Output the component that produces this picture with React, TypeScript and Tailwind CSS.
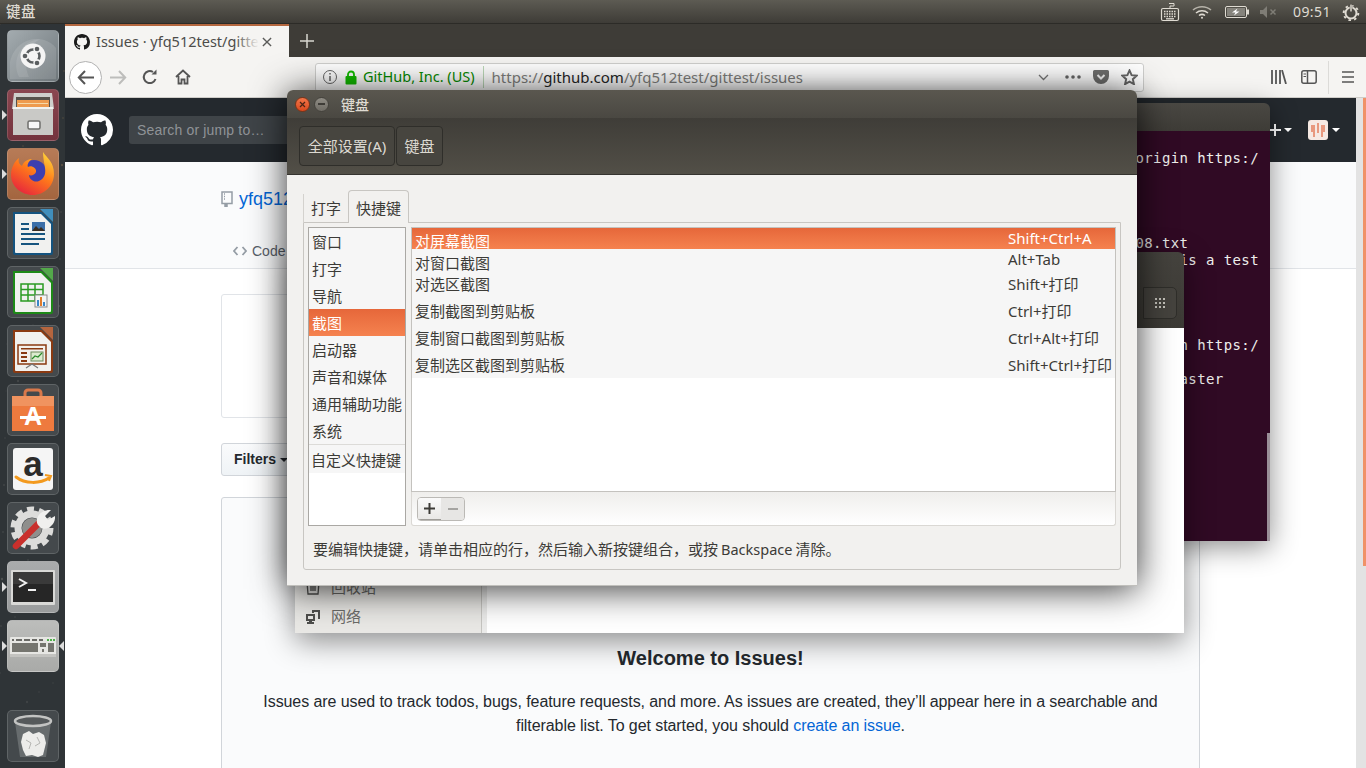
import type { ReactNode } from "react";

const L = ({ children }: { children: ReactNode }) => <span className="text-[14.500px] mx-[3px]">{children}</span>;

const GH =
  "M8 0C3.58 0 0 3.58 0 8c0 3.54 2.29 6.53 5.47 7.59.4.07.55-.17.55-.38 0-.19-.01-.82-.01-1.49-2.01.37-2.53-.49-2.69-.94-.09-.23-.48-.94-.82-1.13-.28-.15-.68-.52-.01-.53.63-.01 1.08.58 1.23.82.72 1.21 1.87.87 2.33.66.07-.52.28-.87.51-1.07-1.78-.2-3.64-.89-3.64-3.95 0-.87.31-1.59.82-2.15-.08-.2-.36-1.02.08-2.12 0 0 .67-.21 2.2.82.64-.18 1.32-.27 2-.27.68 0 1.36.09 2 .27 1.53-1.04 2.2-.82 2.2-.82.44 1.1.16 1.92.08 2.12.51.56.82 1.27.82 2.15 0 3.07-1.87 3.75-3.65 3.95.29.25.54.73.54 1.48 0 1.07-.01 1.93-.01 2.2 0 .21.15.46.55.38A8.013 8.013 0 0016 8c0-4.42-3.58-8-8-8z";

// launcher tile
function Tile({ bg, left, right, children }: { bg: string; left?: boolean; right?: boolean; children: ReactNode }) {
  return (
    <div className={`relative w-[52px] h-[52px] rounded-[5px] border border-white/15 ${bg}`}>
      <svg viewBox="0 0 52 52" className="absolute -inset-px w-[52px] h-[52px]">
        {children}
      </svg>
      {left && <span className="absolute left-[-6px] top-[20px] w-0 h-0 border-y-[5px] border-y-transparent border-l-[5px] border-l-[#dcdcdc]" />}
      {right && <span className="absolute right-[-6px] top-[20px] w-0 h-0 border-y-[5px] border-y-transparent border-r-[5px] border-r-[#dcdcdc]" />}
    </div>
  );
}

function DocShape({ edge, corner, children }: { edge: string; corner: string; children: ReactNode }) {
  return (
    <>
      <path d="M6 5h29l11 11v30a2 2 0 01-2 2H8a2 2 0 01-2-2z" fill={edge} />
      <path d="M33 2h13v13z" fill={corner} opacity="0.85" />
      <path d="M8 7h26l10 10v28a1 1 0 01-1 1H9a1 1 0 01-1-1z" fill="#f1f1ef" />
      {children}
    </>
  );
}

function Launcher() {
  const specks = Array.from({ length: 70 }, (_, i) => ({
    x: (i * 37) % 65,
    y: (i * 113) % 744,
    o: 0.1 + ((i * 7) % 10) / 30,
  }));
  return (
    <div className="relative w-[65px] shrink-0 flex flex-col items-center gap-[7px] pt-[6px] pb-[6px] bg-[#2f3437]">
      <svg className="absolute inset-0 w-[65px] h-[744px]">
        {specks.map((s, i) => (
          <circle key={i} cx={s.x} cy={s.y} r={i % 3 === 0 ? 1.2 : 0.7} fill={s.y < 170 ? "#a8845a" : "#8d8d88"} opacity={s.o} />
        ))}
      </svg>

      {/* ubuntu */}
      <Tile bg="bg-linear-to-br from-[#a3abaf] to-[#6f777b]">
        <path d="M3 32C8 8 36 2 49 18v31H3z" fill="#ffffff" opacity="0.12" />
        <path d="M12 47C4 30 14 10 34 9 22 14 14 28 22 47z" fill="#ffffff" opacity="0.1" />
        <circle cx="26" cy="26" r="12.500" fill="#f4f4f4" />
        <circle cx="26" cy="26" r="6.500" fill="none" stroke="#5a5e60" strokeWidth="2.600" />
        <circle cx="18.500" cy="26" r="3.400" fill="#f4f4f4" />
        <circle cx="29.800" cy="19.500" r="3.400" fill="#f4f4f4" />
        <circle cx="29.800" cy="32.500" r="3.400" fill="#f4f4f4" />
        <circle cx="18" cy="26" r="2.300" fill="#5a5e60" />
        <circle cx="30" cy="19" r="2.300" fill="#5a5e60" />
        <circle cx="30" cy="33" r="2.300" fill="#5a5e60" />
      </Tile>

      {/* files */}
      <Tile left bg="bg-linear-to-b from-[#8a4650] to-[#74333d]">
        <path d="M7 4h38l2 16H5z" fill="#cfcfcc" />
        <rect x="9" y="8" width="34" height="10" fill="#57524c" />
        <rect x="10" y="11" width="32" height="7" fill="#ee9b4f" />
        <rect x="11" y="14" width="30" height="1" fill="#f6d9a8" />
        <path d="M6 19l40-1v28H6z" fill="#c9c9c6" />
        <rect x="6" y="18" width="40" height="2" fill="#f2f2f0" />
        <rect x="21" y="32" width="12" height="8" rx="1.500" fill="#f7f7f7" stroke="#6f6f6c" strokeWidth="1.500" />
      </Tile>

      {/* firefox */}
      <Tile left bg="bg-linear-to-b from-[#b77b57] to-[#a3653f]">
        <defs>
          <linearGradient id="ff" x1="0.800" y1="0" x2="0.200" y2="1">
            <stop offset="0" stopColor="#ffd43a" />
            <stop offset="0.45" stopColor="#ff7a1a" />
            <stop offset="1" stopColor="#e5203f" />
          </linearGradient>
        </defs>
        <circle cx="27" cy="25" r="13" fill="#3d3fb0" />
        <path d="M36 4C40 10 47 14 47 26 47 38 37 47 26 47 14 47 4 38 4 27 4 19 8 13 12 10 11 14 12 16 15 18 17 13 21 11 25 11 21 14 20 17 21 19 24 17 30 20 29 24 28 27 24 28 22 27 22 31 27 35 32 33 37 31 39 26 38 20 37 14 36 9 36 4Z" fill="url(#ff)" />
      </Tile>

      {/* writer */}
      <Tile bg="bg-[#44494c]">
        <DocShape edge="#14537f" corner="#3f9ad0">
          <path d="M14 16h8v2h-8zM14 21h8v2h-8zM14 26h24v2H14zM14 31h24v2H14zM14 36h18v2H14z" fill="#17557f" />
          <rect x="25" y="15" width="13" height="9" fill="#3b6ea8" />
          <path d="M25 24l4-5 3 3 2-2 4 4z" fill="#3a2c20" />
        </DocShape>
      </Tile>

      {/* calc */}
      <Tile bg="bg-[#44494c]">
        <DocShape edge="#1d8a17" corner="#56b84a">
          <path d="M14 18h22v17H14zM14 23.500h22M14 29h22M21 18v17M28 18v17" fill="none" stroke="#2a9a22" strokeWidth="1.500" />
          <rect x="28" y="29" width="12" height="12" fill="#f4f4f4" stroke="#8a8a8a" />
          <path d="M30 34h2v6h-2z" fill="#3a86c8" />
          <path d="M33 31h2v9h-2z" fill="#e07b2a" />
          <path d="M36 36h2v4h-2z" fill="#3a86c8" />
        </DocShape>
      </Tile>

      {/* impress */}
      <Tile bg="bg-[#44494c]">
        <DocShape edge="#8a3a12" corner="#c96a3c">
          <rect x="11" y="20" width="28" height="19" fill="#f4f1ec" stroke="#8a3a12" strokeWidth="1.500" />
          <path d="M14 23h22v1.500H14zM14 27h6v2h-6zM14 31h6v2h-6zM14 35h6v2h-6z" fill="#8a3a12" />
          <rect x="24" y="27" width="12" height="9" fill="#dcebcf" stroke="#6a8a5a" />
          <path d="M25 34l3-3 3 1 4-4" fill="none" stroke="#2a8a2a" strokeWidth="1.200" />
          <path d="M25 39l-6 4M25 39l6 4" stroke="#777" strokeWidth="1.200" />
        </DocShape>
      </Tile>

      {/* software */}
      <Tile bg="bg-[#44494c]">
        <path d="M18 14v-5a3 3 0 013-3h10a3 3 0 013 3v5" fill="none" stroke="#d9784a" strokeWidth="3" />
        <path d="M5 12h42v35H5z" fill="#ee7a3e" />
        <path d="M5 12h42v10H5z" fill="#f0935f" />
        <text x="26" y="41" textAnchor="middle" fontFamily="Liberation Sans" fontWeight="700" fontSize="25" fill="#fff">A</text>
        <rect x="13" y="32" width="26" height="3" fill="#fff" />
      </Tile>

      {/* amazon */}
      <Tile bg="bg-[#44494c]">
        <rect x="6" y="5" width="40" height="42" rx="3" fill="#f5f5f5" />
        <text x="26" y="33" textAnchor="middle" fontFamily="Liberation Sans" fontWeight="700" fontSize="35" fill="#2b2b2b">a</text>
        <path d="M9 34c9 7 24 7 33 1" fill="none" stroke="#f39a1e" strokeWidth="3" strokeLinecap="round" />
        <path d="M38 32l6 1-2 5" fill="none" stroke="#f39a1e" strokeWidth="2" />
      </Tile>

      {/* settings */}
      <Tile bg="bg-[#44494c]">
        <circle cx="25" cy="26" r="10" fill="#8f8f8c" />
        <circle cx="25" cy="26" r="14" fill="none" stroke="#dcdcda" strokeWidth="7" />
        <circle cx="25" cy="26" r="19" fill="none" stroke="#dcdcda" strokeWidth="5" strokeDasharray="7 5" />
        <path d="M9 44l24-24" stroke="#c9302c" strokeWidth="6.500" strokeLinecap="round" />
        <path d="M31 23c-4-7 3-16 13-15l-6 6 3 4 7-4c1 8-7 15-14 12z" fill="#f0f0ee" />
      </Tile>

      {/* terminal */}
      <Tile left bg="bg-linear-to-b from-[#a9abac] to-[#9a9c9d]">
        <rect x="4" y="9" width="44" height="35" rx="1" fill="#d9d9d7" />
        <rect x="6" y="11" width="40" height="30" fill="#262626" />
        <rect x="6" y="11" width="40" height="12" fill="#3a3a3a" />
        <path d="M12 18l7 4-7 4" fill="none" stroke="#f1f1f1" strokeWidth="2" />
        <rect x="21" y="28" width="8" height="2" fill="#f1f1f1" />
      </Tile>

      {/* keyboard */}
      <Tile left right bg="bg-linear-to-b from-[#bcbdbb] to-[#a9aaa8]">
        <rect x="3" y="17" width="46" height="20" rx="1" fill="#e6e6e3" />
        <rect x="3" y="34" width="46" height="3" fill="#c3c3c0" />
        <path d="M5 19h2v2H5zM9 19h6v2H9zM17 19h6v2h-6zM25 19h5v2h-5zM32 19h4v2h-4z" fill="#6a6a66" />
        <path d="M5 23h26v9H5zM33 23h6v4h-6zM35 29h2v3h-2zM41 23h6v9h-6z" fill="#75756f" />
        <path d="M40 19h2v2h-2zM43 19h2v2h-2zM46 19h2v2h-2z" fill="#4fb04a" />
      </Tile>

      {/* trash */}
      <div className="mt-auto">
        <Tile bg="bg-[#44494c]">
          <path d="M8 12l5 35h26l5-35z" fill="#7b7f81" opacity="0.65" />
          <path d="M16 24l6-3 4 3 6-2 5 3 2 8-3 12-5 2-6-2-6 1-3-6-2-8z" fill="#ececea" />
          <path d="M19 30l5 3-2 6M30 27l3 6-5 3" fill="none" stroke="#b5b5b2" strokeWidth="1" />
          <ellipse cx="26" cy="11" rx="18" ry="5" fill="#55595b" stroke="#c3c4c3" strokeWidth="2.500" />
        </Tile>
      </div>
    </div>
  );
}

function TopBar() {
  return (
    <div className="h-[24px] shrink-0 flex items-center bg-linear-to-b from-[#5d5b53] to-[#3e3c37] border-b border-[#2c2b27] text-[#dfdbd2]">
      <span className="ml-[6px] text-[14.500px] font-medium tracking-[0.5px]">键盘</span>
      <div className="ml-auto flex items-center">
        <svg width="20" height="22" viewBox="0 0 20 22" fill="none" stroke="#dfdbd2" className="mr-[12px]">
          <rect x="1.500" y="7.500" width="17" height="12" rx="1.500" strokeWidth="1.200" />
          <path d="M4 10.500h12M4 13h12M4 15.500h12" strokeWidth="1.500" strokeDasharray="1.500 1" />
          <path d="M6 17.800h8" strokeWidth="1.300" />
          <path d="M10 7.500V5h4V2.500H9" strokeWidth="1" />
        </svg>
        <svg width="20" height="14" viewBox="0 0 20 14" fill="none" stroke="#dfdbd2" strokeWidth="1.500" className="mr-[13px]">
          <path d="M1 5c5-4.500 13-4.500 18 0" opacity="0.7" />
          <path d="M4 8c3.500-3 8.500-3 12 0" />
          <path d="M7 10.500c2-1.500 4-1.500 6 0" />
          <circle cx="10" cy="12.700" r="1" fill="#dfdbd2" stroke="none" />
        </svg>
        <svg width="24" height="12" viewBox="0 0 24 12" className="mr-[11px]">
          <rect x="0.500" y="0.500" width="21" height="11" rx="1.500" fill="none" stroke="#dfdbd2" />
          <rect x="2" y="2" width="18" height="8" fill="#85837c" />
          <rect x="22" y="3.500" width="2" height="5" fill="#dfdbd2" />
          <path d="M12.500 2.500L7 6.500h3.500L9 9.500l5.500-4H11z" fill="#fff" />
        </svg>
        <svg width="18" height="12" viewBox="0 0 18 12" className="mr-[15px]" fill="#7f7d76">
          <path d="M0 4h3l4-4v12L3 8H0z" />
          <path d="M10.500 3.500l5 5M15.500 3.500l-5 5" stroke="#7f7d76" strokeWidth="1.500" fill="none" />
        </svg>
        <span className="text-[14px] tracking-[0.4px] w-[35px] mr-[14px]">09:51</span>
        <svg width="18" height="18" viewBox="0 0 18 18" fill="none" stroke="#dfdbd2" className="mr-[6px]">
          <circle cx="9" cy="10" r="5.500" strokeWidth="2" />
          <circle cx="9" cy="10" r="7.300" strokeWidth="2" strokeDasharray="2.500 3.200" />
          <path d="M9 1v8" strokeWidth="2.500" stroke="#45433d" />
          <path d="M9 1.500v7" strokeWidth="1.500" />
        </svg>
      </div>
    </div>
  );
}

function BrowserChrome() {
  return (
    <>
      <div className="h-[33px] shrink-0 flex bg-[#3e3c37]">
        <div className="w-[224px] flex items-center bg-[#f5f4f2] border-t-2 border-t-[#b4673f] pl-[9px] relative overflow-hidden">
          <svg width="16" height="16" viewBox="0 0 16 16" fill="#1b1b1b" className="shrink-0">
            <path d={GH} />
          </svg>
          <span className="ml-[6px] text-[14.500px] text-[#4c4c4a] whitespace-nowrap">Issues · yfq512test/gittest</span>
          <div className="absolute right-[30px] top-0 bottom-0 w-[24px] bg-linear-to-r from-transparent to-[#f5f4f2]" />
          <div className="absolute right-0 top-0 bottom-0 w-[30px] bg-[#f5f4f2] flex items-center pl-[3px]">
            <svg width="10" height="10" viewBox="0 0 11 11" stroke="#5b5b59" strokeWidth="1.500"><path d="M1 1l9 9M10 1l-9 9" /></svg>
          </div>
        </div>
        <div className="w-[35px] flex items-center justify-center">
          <svg width="14" height="14" viewBox="0 0 14 14" stroke="#d8d6d0" strokeWidth="1.500"><path d="M7 0v14M0 7h14" /></svg>
        </div>
      </div>

      <div className="h-[41px] shrink-0 flex items-center bg-[#f5f4f2] border-b border-[#cfcdc9] relative">
        <div className="ml-[4px] w-[33px] h-[33px] rounded-full bg-white border border-[#b1b1b1] flex items-center justify-center">
          <svg width="17" height="15" viewBox="0 0 17 15" fill="none" stroke="#555" strokeWidth="2"><path d="M17 7.500H2M8 1L1.800 7.500 8 14" /></svg>
        </div>
        <svg width="17" height="15" viewBox="0 0 17 15" fill="none" stroke="#bdbdbb" strokeWidth="2" className="ml-[8px]"><path d="M0 7.500h15M9 1l6.200 6.500L9 14" /></svg>
        <svg width="16" height="16" viewBox="0 0 16 16" fill="none" stroke="#555" strokeWidth="2" className="ml-[15px]"><path d="M13.500 10A6 6 0 1111 3" /><path d="M9.500 5.500h5v-5" fill="#555" stroke="none" /></svg>
        <svg width="16" height="16" viewBox="0 0 16 16" fill="none" stroke="#555" strokeWidth="1.800" className="ml-[17px]"><path d="M1 8l7-6.500L15 8M3.500 7v7.500h3v-4h3v4h3V7" /></svg>

        {/* url bar */}
        <div className="ml-[124px] w-[829px] h-[29px] bg-white border border-[#cfcfcd] rounded-[3px] flex items-center text-[14.500px]">
          <svg width="16" height="16" viewBox="0 0 16 16" fill="none" stroke="#666" className="ml-[6px]">
            <circle cx="8" cy="8" r="6.500" />
            <path d="M8 7v5M8 4v1.500" strokeWidth="1.500" />
          </svg>
          <svg width="12" height="15" viewBox="0 0 12 15" className="ml-[7px]">
            <path d="M3 7V4.500a3 3 0 016 0V7" fill="none" stroke="#12bc00" strokeWidth="1.800" />
            <rect x="0.500" y="6" width="11" height="8.500" rx="1" fill="#12bc00" />
          </svg>
          <span className="ml-[6px] text-[#058b00] whitespace-nowrap">GitHub, Inc. (US)</span>
          <span className="ml-[8px] w-px h-[22px] bg-[#bcd9b8]" />
          <span className="ml-[8px] text-[15px] text-[#7f7f7d] whitespace-nowrap">
            https://<span className="text-[#262626]">github.com</span>/yfq512test/gittest/issues
          </span>
          <div className="ml-auto flex items-center">
            <svg width="11" height="7" viewBox="0 0 11 7" fill="none" stroke="#777" strokeWidth="1.300"><path d="M1 1l4.500 4.500L10 1" /></svg>
            <svg width="16" height="4" viewBox="0 0 16 4" fill="#666" className="ml-[16px]">
              <circle cx="2" cy="2" r="1.800" /><circle cx="8" cy="2" r="1.800" /><circle cx="14" cy="2" r="1.800" />
            </svg>
            <svg width="16" height="14" viewBox="0 0 16 14" className="ml-[12px]">
              <path d="M1.500 0h13A1.500 1.500 0 0116 1.500V6A8 8 0 010 6V1.500A1.500 1.500 0 011.500 0z" fill="#6f6f6e" />
              <path d="M4.500 5L8 8.500 11.500 5" fill="none" stroke="#f5f5f5" strokeWidth="2" />
            </svg>
            <svg width="17" height="16" viewBox="0 0 24 23" fill="none" stroke="#666" strokeWidth="2.800" className="ml-[12px] mr-[5px]">
              <path d="M12 2l3 6.800 7.300.8-5.500 5 1.600 7.200L12 18.200 5.600 21.800l1.600-7.200-5.500-5 7.300-.8z" />
            </svg>
          </div>
        </div>

        <svg width="16" height="14" viewBox="0 0 16 14" fill="none" stroke="#555" strokeWidth="1.800" className="ml-[127px]"><path d="M1 0v14M5 0v14M9 0v14M11 0l4 14" /></svg>
        <svg width="16" height="14" viewBox="0 0 16 14" fill="none" stroke="#555" strokeWidth="1.500" className="ml-[14px]">
          <rect x="0.800" y="0.800" width="14.400" height="12.400" rx="2" />
          <path d="M6.500 1v12" />
          <path d="M2.500 4h2.500M2.500 6.500h2.500" strokeWidth="1" />
        </svg>
        <span className="ml-[11px] w-px h-[33px] bg-[#dcdbd8]" />
        <svg width="12" height="12" viewBox="0 0 12 12" stroke="#555" strokeWidth="1.500" className="ml-[13px]"><path d="M0 1h12M0 6h12M0 11h12" /></svg>
      </div>
    </>
  );
}

function GithubPage() {
  return (
    <div className="flex-1 flex min-h-0 font-['Liberation_Sans',sans-serif]">
      <div className="flex-1 min-w-0 flex flex-col bg-white">
        <div className="h-[64px] shrink-0 bg-[#24292e] flex items-center pl-[16px] relative">
          <svg width="32" height="32" viewBox="0 0 16 16" fill="#fff"><path d={GH} /></svg>
          <div className="ml-[16px] w-[300px] h-[28px] rounded-[3px] bg-[#3f4448] flex items-center pl-[8px] text-[14px] tracking-[0.17px] text-[#8f9397]">Search or jump to…</div>
          <div className="ml-auto flex items-center mr-[16px] text-white">
            <svg width="14" height="14" viewBox="0 0 14 14" stroke="#fff" strokeWidth="2"><path d="M7 1v12M1 7h12" /></svg>
            <span className="ml-[2px] w-0 h-0 border-x-[4px] border-x-transparent border-t-[4px] border-t-white" />
            <div className="ml-[16px] w-[20px] h-[20px] rounded-[3px] bg-[#f6e9e3] flex items-stretch justify-center overflow-hidden">
              <svg width="20" height="20" viewBox="0 0 20 20" fill="#e8997f"><path d="M3 5h4v12H5V12H3zM9 3h2v10H9zM13 5h4v7h-2v5h-2z" /></svg>
            </div>
            <span className="ml-[4px] w-0 h-0 border-x-[4px] border-x-transparent border-t-[4px] border-t-white" />
          </div>
        </div>

        <div className="h-[107px] shrink-0 bg-[#fafbfc] border-b border-[#e1e4e8] pl-[156px] flex flex-col">
          <div className="mt-[25px] flex items-center h-[24px]">
            <svg width="12" height="16" viewBox="0 0 12 16" fill="none" stroke="#959da5" strokeWidth="1.500"><path d="M1 12.500V1h10v11.500zM1 12.500h10M3 3h1M3 5.500h1M3 8h1M4 12.500V15l1-1 1 1v-2.500" /></svg>
            <span className="ml-[6px] text-[18px] text-[#0366d6]">yfq512test</span>
          </div>
          <div className="mt-[28px] ml-[12px] flex items-center h-[24px] text-[14px] text-[#586069]">
            <svg width="14" height="10" viewBox="0 0 14 10" fill="none" stroke="#959da5" strokeWidth="1.800"><path d="M4.500 1L1 5l3.500 4M9.500 1L13 5 9.500 9" /></svg>
            <span className="ml-[5px]">Code</span>
          </div>
        </div>

        <div className="pl-[156px] flex-1 min-h-0 overflow-hidden">
          <div className="mt-[25px] w-[979px] h-[124px] rounded-[3px] border border-[#e1e4e8]" />
          <div className="mt-[25px] w-[90px] h-[33px] rounded-[3px] border border-[#d1d5da] bg-linear-to-b from-[#fafbfc] to-[#eff3f6] flex items-center pl-[12px] text-[14px] font-bold text-[#24292e]">
            Filters
            <span className="ml-[4px] w-0 h-0 border-x-[4px] border-x-transparent border-t-[4px] border-t-[#24292e]" />
          </div>
          <div className="mt-[21px] w-[979px] h-[400px] rounded-[3px] border border-[#d1d5da] bg-[#fafbfc] text-center">
            <h2 className="mt-[147px] text-[20px] leading-[26px] font-bold text-[#24292e]">Welcome to Issues!</h2>
            <p className="mt-[19px] mx-auto w-[920px] text-[16px] tracking-[-0.08px] leading-[24px] text-[#24292e]">
              Issues are used to track todos, bugs, feature requests, and more. As issues are created, they’ll appear here in a searchable and filterable list. To get started, you should <a className="text-[#0366d6]">create an issue</a>.
            </p>
          </div>
        </div>
      </div>
      <div className="w-[10px] shrink-0 bg-[#e3e3e3] flex justify-end">
        <div className="w-[3px] h-[468px] bg-[#f09268]" />
      </div>
    </div>
  );
}

function TerminalWindow() {
  const lines = ["", "origin https:/", "", "", "", "", "test08.txt        ", "This is a test", "", "", "", "", "origin https:/", "", "master    "];
  return (
    <div className="absolute left-[700px] top-[103px] w-[570px] h-[438px] rounded-t-[6px] overflow-hidden flex flex-col shadow-[0_6px_28px_rgba(0,0,0,0.45)]">
      <div className="h-[28px] shrink-0 bg-linear-to-b from-[#4a4843] to-[#3e3c37]" />
      <div className="flex-1 relative bg-[#300a24] pt-[1.500px] pr-[11px] text-right font-['DejaVu_Sans_Mono',monospace] text-[14px] tracking-[0.4px] leading-[17px] text-[#eeeeec]">
        {lines.map((l, i) => (
          <div key={i} className="h-[17px] whitespace-pre">{l}</div>
        ))}
        <div className="absolute right-0 bottom-0 w-[3px] h-[108px] bg-[#9a8f98]" />
      </div>
    </div>
  );
}

function FilesWindow() {
  return (
    <div className="absolute left-[295px] top-[252px] w-[889px] h-[381px] rounded-t-[6px] overflow-hidden flex flex-col shadow-[0_8px_30px_rgba(0,0,0,0.45)]">
      <div className="h-[76px] shrink-0 bg-linear-to-b from-[#45433e] to-[#3c3a35] flex justify-end pt-[35px] pr-[7px] relative">
        <div className="w-[34px] h-[32px] rounded-r-[5px] border border-[#2f2e2a] bg-[#45433e] flex items-center justify-center">
          <svg width="12" height="12" viewBox="0 0 12 12" fill="#c4c2bb">
            {[1, 5, 9].map((y) => [1, 5, 9].map((x) => <rect key={`${x}-${y}`} x={x} y={y} width="2" height="2" />))}
          </svg>
        </div>
      </div>
      <div className="flex-1 min-h-0 flex bg-white">
        <div className="w-[187px] shrink-0 bg-[#e9e8e5] border-r border-[#c6c5c1] flex flex-col justify-end pb-[2px] text-[15px] text-[#6b6b68]">
          <div className="h-[29px] flex items-center pl-[10px]">
            <svg width="16" height="16" viewBox="0 0 16 16" fill="none" stroke="#4e4e4c" strokeWidth="1.300"><path d="M2 2h12l-1 12H3zM6 5v6M8 5v6M10 5v6" /></svg>
            <span className="ml-[10px]">回收站</span>
          </div>
          <div className="h-[29px] flex items-center pl-[10px]">
            <svg width="16" height="16" viewBox="0 0 16 16" fill="#4e4e4c"><path d="M7 1h8v9h-2V3H9v1H7zM1 5h9v7H7v1h2v2H2v-2h2v-1H1zm2 2v3h5V7z" /></svg>
            <span className="ml-[10px]">网络</span>
          </div>
        </div>
        <div className="w-[5px] shrink-0 bg-[#ebebea]" />
        <div className="flex-1" />
      </div>
    </div>
  );
}

const categories = ["窗口", "打字", "导航", "截图", "启动器", "声音和媒体", "通用辅助功能", "系统"];

const shortcuts: { name: string; keys: string; row: string; nameCls: string; keyCls: string }[] = [
  { name: "对屏幕截图", keys: "Shift+Ctrl+A", row: "h-[21px] text-white bg-linear-to-b from-[#e6673a] to-[#f5824f] items-start overflow-hidden", nameCls: "mt-[3px]", keyCls: "" },
  { name: "对窗口截图", keys: "Alt+Tab", row: "h-[22px] items-start", nameCls: "mt-[4px]", keyCls: "" },
  { name: "对选区截图", keys: "Shift+打印", row: "h-[27px] items-start", nameCls: "mt-[3px]", keyCls: "mt-[3px]" },
  { name: "复制截图到剪贴板", keys: "Ctrl+打印", row: "h-[27px] items-center pb-[2px]", nameCls: "", keyCls: "" },
  { name: "复制窗口截图到剪贴板", keys: "Ctrl+Alt+打印", row: "h-[27px] items-center pb-[2px]", nameCls: "", keyCls: "" },
  { name: "复制选区截图到剪贴板", keys: "Shift+Ctrl+打印", row: "h-[26px] items-center", nameCls: "", keyCls: "" },
];

function KeyboardDialog() {
  return (
    <div className="absolute left-[287px] top-[90px] w-[850px] h-[496px] rounded-t-[6px] flex flex-col shadow-[0_3px_36px_rgba(0,0,0,0.8)]">
      {/* title bar */}
      <div className="h-[28px] shrink-0 rounded-t-[6px] flex items-center bg-linear-to-b from-[#5a574f] to-[#4a4842] pl-[8px] text-[#dfdbd2]">
        <span className="w-[15px] h-[15px] rounded-full bg-linear-to-b from-[#f27548] to-[#d9481c] border border-[#7c3317] flex items-center justify-center">
          <svg width="7" height="7" viewBox="0 0 7 7" stroke="#4a2415" strokeWidth="1.200"><path d="M1 1l5 5M6 1L1 6" /></svg>
        </span>
        <span className="ml-[4px] w-[15px] h-[15px] rounded-full bg-linear-to-b from-[#8f8c84] to-[#6f6c65] border border-[#45433d] flex items-center justify-center">
          <span className="w-[7px] h-[1.500px] bg-[#3e3c37]" />
        </span>
        <span className="ml-[12px] text-[14px] font-medium">键盘</span>
      </div>

      {/* toolbar */}
      <div className="h-[57px] shrink-0 flex items-start gap-px pt-[8px] pl-[12px] bg-linear-to-b from-[#3f3d38] to-[#524f47] border-b border-[#35332f] text-[#dcd9d1]">
        <div className="w-[96px] h-[40px] flex items-center justify-center rounded-[4px] border border-[#2f2e2a] bg-[#47453f]">全部设置(A)</div>
        <div className="w-[47px] h-[40px] flex items-center justify-center rounded-[4px] border border-[#2f2e2a] bg-[#47453f]">键盘</div>
      </div>

      {/* body */}
      <div className="flex-1 min-h-0 bg-[#f2f1ef] border-b border-[#c0bfbb] px-[16px] pt-[15px] pb-[15px] flex flex-col text-[#3c3b37]">
        <div className="h-[32px] shrink-0 flex items-end relative z-10">
          <div className="w-[45px] h-[28px] flex items-center justify-center border-l border-[#d4d2ce]">打字</div>
          <div className="w-[61px] h-[33px] -mb-px pt-[2px] flex items-center justify-center bg-[#f2f1ef] border border-b-0 border-[#c8c6c2] rounded-t-[4px]">快捷键</div>
        </div>

        <div className="flex-1 min-h-0 border border-[#c8c6c2] rounded-b-[3px] p-[4px] flex flex-col">
          <div className="h-[299px] shrink-0 flex gap-[5px]">
            {/* categories */}
            <div className="w-[98px] shrink-0 border border-[#aaa8a4] bg-white">
              {categories.map((c) => (
                <div key={c} className={c === "截图" ? "h-[27px] pl-[3px] pt-[1.500px] flex items-center whitespace-nowrap text-white bg-linear-to-b from-[#e6673a] to-[#f5824f]" : "h-[27px] pl-[3px] pt-[1.500px] flex items-center whitespace-nowrap bg-[#f6f6f6]"}>
                  {c}
                </div>
              ))}
              <div className="h-px bg-[#dcdbd8]" />
              <div className="h-[28px] pl-[2px] pt-[3px] flex items-center whitespace-nowrap bg-[#f6f6f6]">自定义快捷键</div>
            </div>

            {/* shortcuts */}
            <div className="w-[705px] shrink-0 flex flex-col">
              <div className="h-[265px] shrink-0 border border-[#c4c2be] bg-white">
                {shortcuts.map((s) => (
                  <div key={s.name} className={`flex pl-[3px] bg-[#f6f6f6] ${s.row}`}>
                    <span className={`w-[593px] shrink-0 whitespace-nowrap leading-[20px] ${s.nameCls}`}>{s.name}</span>
                    <span className={`whitespace-nowrap leading-[20px] ${s.keyCls}`}>{s.keys}</span>
                  </div>
                ))}
              </div>
              <div className="flex-1 border border-t-0 border-[#dad8d4] rounded-b-[3px] bg-linear-to-b from-[#efeeec] to-[#ffffff] flex items-center pl-[5px]">
                <div className="w-[48px] h-[24px] flex rounded-[4px] border border-[#bbb9b5] overflow-hidden">
                  <div className="flex-1 bg-linear-to-b from-[#fafafa] to-[#e9e8e6] border-b border-[#9f9d99] flex items-center justify-center">
                    <svg width="11" height="11" viewBox="0 0 11 11" stroke="#3c3b37" strokeWidth="2"><path d="M5.500 0v11M0 5.500h11" /></svg>
                  </div>
                  <div className="flex-1 bg-[#e7e6e4] flex items-center justify-center">
                    <span className="w-[10px] h-[2px] bg-[#a5a4a1]" />
                  </div>
                </div>
              </div>
            </div>
          </div>
          <div className="flex-1 flex items-center pl-[5px] pt-[8px] whitespace-nowrap">
            要编辑快捷键，请单击相应的行，然后输入新按键组合，或按<L>Backspace</L>清除。
          </div>
        </div>
      </div>
    </div>
  );
}

export default function App() {
  return (
    <div className="relative w-[1366px] h-[768px] overflow-hidden flex flex-col bg-[#2f3437] text-[15px] font-['Noto_Sans','Noto_Sans_CJK_SC',sans-serif]">
      <TopBar />
      <div className="flex-1 min-h-0 flex">
        <Launcher />
        <div className="flex-1 min-w-0 flex flex-col">
          <BrowserChrome />
          <GithubPage />
        </div>
      </div>

      {/* open windows */}
      <TerminalWindow />
      <FilesWindow />
      <KeyboardDialog />
    </div>
  );
}
